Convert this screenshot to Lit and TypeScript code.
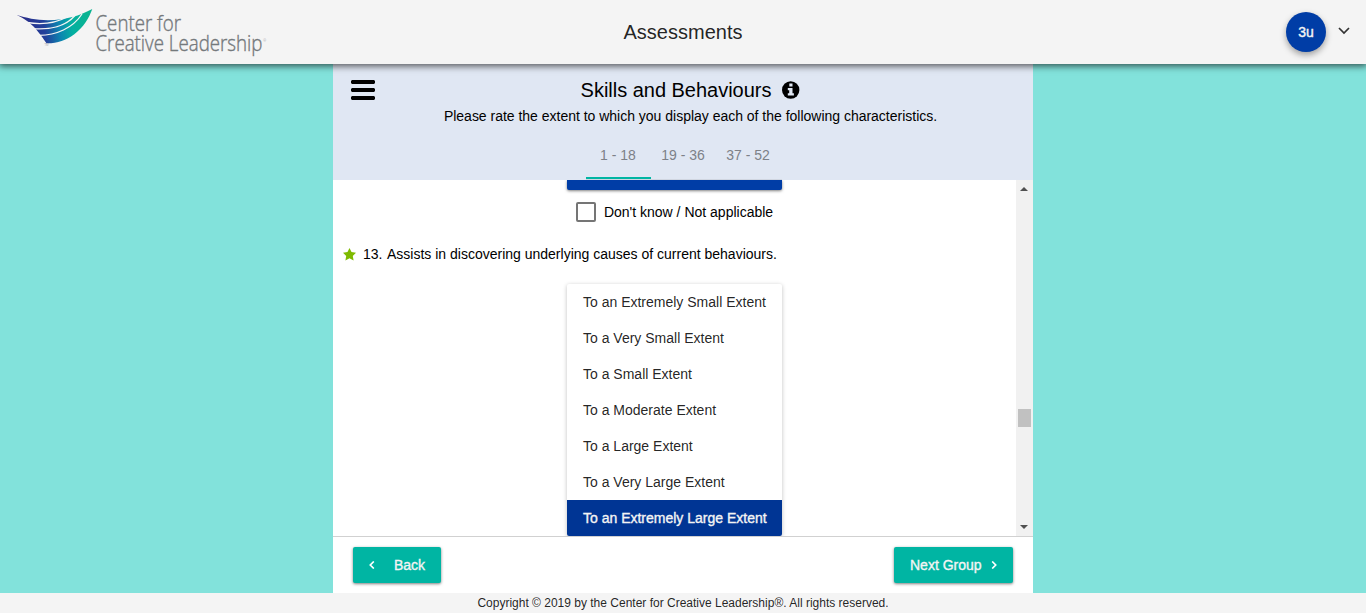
import { LitElement, html, css, svg } from "lit";
import { customElement } from "lit/decorators.js";
import { classMap } from "lit/directives/class-map.js";

const OPTIONS = [
  "To an Extremely Small Extent",
  "To a Very Small Extent",
  "To a Small Extent",
  "To a Moderate Extent",
  "To a Large Extent",
  "To a Very Large Extent",
  "To an Extremely Large Extent",
];
const TABS = ["1 - 18", "19 - 36", "37 - 52"];

const wings = svg`
  <defs>
    <linearGradient id="wing" x1="17" y1="15" x2="86" y2="5" gradientUnits="userSpaceOnUse">
      <stop offset="0" stop-color="#2b2a86"/>
      <stop offset=".36" stop-color="#233f9a"/>
      <stop offset=".58" stop-color="#0c86b0"/>
      <stop offset=".76" stop-color="#04b0a0"/>
      <stop offset="1" stop-color="#0ab391"/>
    </linearGradient>
  </defs>
  <path fill="url(#wing)" d="M16.500 14.800C26 18 36 20.200 48 20.200C66 20.200 80 15.500 92.300 9C89 18 84 27 74 34.500C66 40.500 57 43.500 46.500 43.300C42 36.500 36 28 29 22.500C25 19.500 21 17 16.500 14.800Z"/>
  <g fill="none" stroke="#f4f4f4" stroke-width="1.300">
    <path d="M27 22.500C42 25 56 23 67 17"/>
    <path d="M33 28.700C50 30 66 26 75 15.500"/>
    <path d="M38.500 35.300C56 35.500 73 28 82 14"/>
  </g>`;

@customElement("app-root")
export class AppRoot extends LitElement {
  static styles = css`
    :host { display: flex; flex-direction: column; width: 100%; height: 613px; overflow: hidden;
      background: #82e2db; color: #000; font: 14px/20px "Liberation Sans", Arial, sans-serif; }
    * { box-sizing: border-box; }
    svg { display: block; flex: none; }
    .top { height: 64px; flex: none; display: grid; grid-template-columns: 1fr auto 1fr; align-items: center;
      background: #f4f4f4; box-shadow: 0 1px 7px 1px rgba(0,0,0,.65); z-index: 2; }
    .logo { overflow: visible; }
    .logo-text { font-family: "Open Sans", sans-serif; font-weight: 300; fill: #74797c; stroke: #74797c; stroke-width: .4; }
    .mark { stroke-width: 0; }
    .app-title { font-size: 20px; color: rgba(0,0,0,.87); letter-spacing: .02px; }
    .user { display: flex; justify-content: flex-end; align-items: center; gap: 12px; padding-right: 16px; }
    .avatar { width: 40px; height: 40px; border-radius: 50%; background: #003da6; color: #f4f4f4;
      display: grid; place-items: center; box-shadow: 0 3px 6px rgba(0,0,0,.35);
      -webkit-text-stroke: .4px currentColor; }
    .chevron { margin-bottom: 2px; }
    .panel { width: 700px; height: 529px; flex: none; align-self: center; display: flex; flex-direction: column; background: #fff; }
    .head { height: 116px; flex: none; display: flex; background: #e0e7f3; }
    .menu { padding: 16px 0 0 18px; width: 42px; }
    .head-main { flex: 1; display: flex; flex-direction: column; align-items: center; padding: 14px 27px 0 0; }
    .heading { display: flex; align-items: center; gap: 11px; font-size: 20px; line-height: 24px; white-space: nowrap; letter-spacing: -.02px; }
    .intro { margin-top: 4px; letter-spacing: -.012px; white-space: nowrap; }
    .tabs { display: flex; margin: 14px 0 0 -13px; height: 40px; width: 196px; border-bottom: 1px solid #d0d6e1; }
    .tab { height: 39px; width: 65px; padding: 5px 1px 0 0; text-align: center; color: #7d8188; border-bottom: 2px solid transparent; }
    .tab.on { border-color: #00b5a3; }
    .scroller { flex: 1; min-height: 0; display: flex; border-bottom: 1px solid #d1d1d1; }
    .questions { flex: 1; display: flex; flex-direction: column; align-items: center; overflow: hidden; }
    .prev { width: 215px; height: 10px; flex: none; background: #003da6; border-radius: 0 0 2px 2px;
      box-shadow: 0 1px 3px rgba(0,0,0,.5); }
    .dont-know { display: flex; align-items: center; gap: 8px; margin-top: 12px; height: 20px; }
    .box { width: 20px; height: 20px; border: 2px solid #757575; border-radius: 2px; }
    .question { align-self: stretch; display: flex; align-items: center; padding-left: 10px; margin: 22px 0 20px; height: 20px; white-space: nowrap; }
    .num { margin-left: 7px; width: 24px; }
    .options { width: 215px; flex: none; border-radius: 2px; box-shadow: 0 1px 4px rgba(0,0,0,.25); }
    .option { height: 36px; line-height: 36px; padding-left: 16px; color: rgba(0,0,0,.87); white-space: nowrap; }
    .option.on { background: #003594; color: #f4f4f4; -webkit-text-stroke: .35px currentColor; border-radius: 0 0 2px 2px; }
    .bar { width: 17px; display: flex; flex-direction: column; align-items: center; background: #f1f1f1; padding: 7px 1px 7px 0; }
    .thumb { width: 13px; height: 18px; background: #c1c1c1; margin: 218px -1px auto 0; }
    .nav { height: 56px; flex: none; display: flex; justify-content: space-between; padding: 10px 20px; }
    .btn { height: 36px; display: flex; align-items: center; padding: 0 16px; background: #00b5a3; color: #f4f4f4;
      border-radius: 2px; box-shadow: 0 1px 3px rgba(0,0,0,.5); -webkit-text-stroke: .35px currentColor; white-space: nowrap; }
    .back { gap: 19px; padding-left: 16px; width: 88px; }
    .next { gap: 9px; width: 119px; }
    .foot { height: 20px; flex: none; background: #f4f4f4; font-size: 12px; text-align: center; color: rgba(0,0,0,.87); }
  `;

  render() {
    return html`
      <header class="top">
        <svg class="logo" width="280" height="64" viewBox="0 0 280 64">
          ${wings}
          <text class="logo-text" x="95.500" y="31" font-size="22" textLength="85.500" lengthAdjust="spacingAndGlyphs">Center for</text>
          <text class="logo-text" x="95.500" y="51" font-size="22" textLength="167" lengthAdjust="spacingAndGlyphs">Creative Leadership</text>
          <text class="logo-text mark" x="263" y="42" font-size="4">®</text>
          <text class="logo-text mark" x="44.500" y="46" font-size="3">TM</text>
        </svg>
        <div class="app-title">Assessments</div>
        <div class="user">
          <div class="avatar">3u</div>
          <svg class="chevron" width="12" height="12" viewBox="0 0 12 12"><path d="M1 3l5 5 5-5" fill="none" stroke="#333" stroke-width="1.700"/></svg>
        </div>
      </header>
      <main class="panel">
        <section class="head">
          <div class="menu">
            <svg width="24" height="20" viewBox="0 0 24 20"><path d="M1 0h22l1 1v2l-1 1H1L0 3V1zM1 8h22l1 1v2l-1 1H1l-1-1V9zM1 16h22l1 1v2l-1 1H1l-1-1v-2z"/></svg>
          </div>
          <div class="head-main">
            <div class="heading">Skills and Behaviours
              <svg width="18" height="18" viewBox="0 0 18 18"><circle cx="8.700" cy="9" r="8.700"/><path fill="#e0e7f3" d="M7.300 2.600h3.200v3H7.300zM5.800 7h4.700v5.300h1.400v2.300H5.800v-2.300h1.400V9.300H5.800z"/></svg>
            </div>
            <div class="intro">Please rate the extent to which you display each of the following characteristics.</div>
            <div class="tabs">${TABS.map((t, i) => html`<div class=${classMap({ tab: true, on: i === 0 })}>${t}</div>`)}</div>
          </div>
        </section>
        <section class="scroller">
          <div class="questions">
            <div class="prev"></div>
            <div class="dont-know"><span class="box"></span><span>Don't know / Not applicable</span></div>
            <div class="question">
              <svg width="13" height="13" viewBox="0 0 13 13"><path fill="#7fba00" d="M6.500 0l2 4.100 4.500.6-3.200 3.200.8 4.600-4.100-2.200-4.100 2.200.8-4.600L0 4.700l4.500-.6z"/></svg>
              <span class="num">13.</span><span>Assists in discovering underlying causes of current behaviours.</span>
            </div>
            <div class="options">
              ${OPTIONS.map((o, i) => html`<div class=${classMap({ option: true, on: i === 6 })}>${o}</div>`)}
            </div>
          </div>
          <div class="bar">
            <svg width="8" height="4" viewBox="0 0 8 4"><path fill="#505050" d="M0 4l4-4 4 4z"/></svg>
            <div class="thumb"></div>
            <svg width="8" height="4" viewBox="0 0 8 4"><path fill="#505050" d="M0 0l4 4 4-4z"/></svg>
          </div>
        </section>
        <nav class="nav">
          <div class="btn back">
            <svg width="6" height="8" viewBox="0 0 6 8"><path d="M4.800.5L1.300 4l3.500 3.500" fill="none" stroke="#fff" stroke-width="1.700"/></svg><span>Back</span>
          </div>
          <div class="btn next">
            <span>Next Group</span><svg width="6" height="8" viewBox="0 0 6 8"><path d="M1.200.5L4.700 4 1.200 7.500" fill="none" stroke="#fff" stroke-width="1.700"/></svg>
          </div>
        </nav>
      </main>
      <footer class="foot">Copyright © 2019 by the Center for Creative Leadership®. All rights reserved.</footer>
    `;
  }
}
